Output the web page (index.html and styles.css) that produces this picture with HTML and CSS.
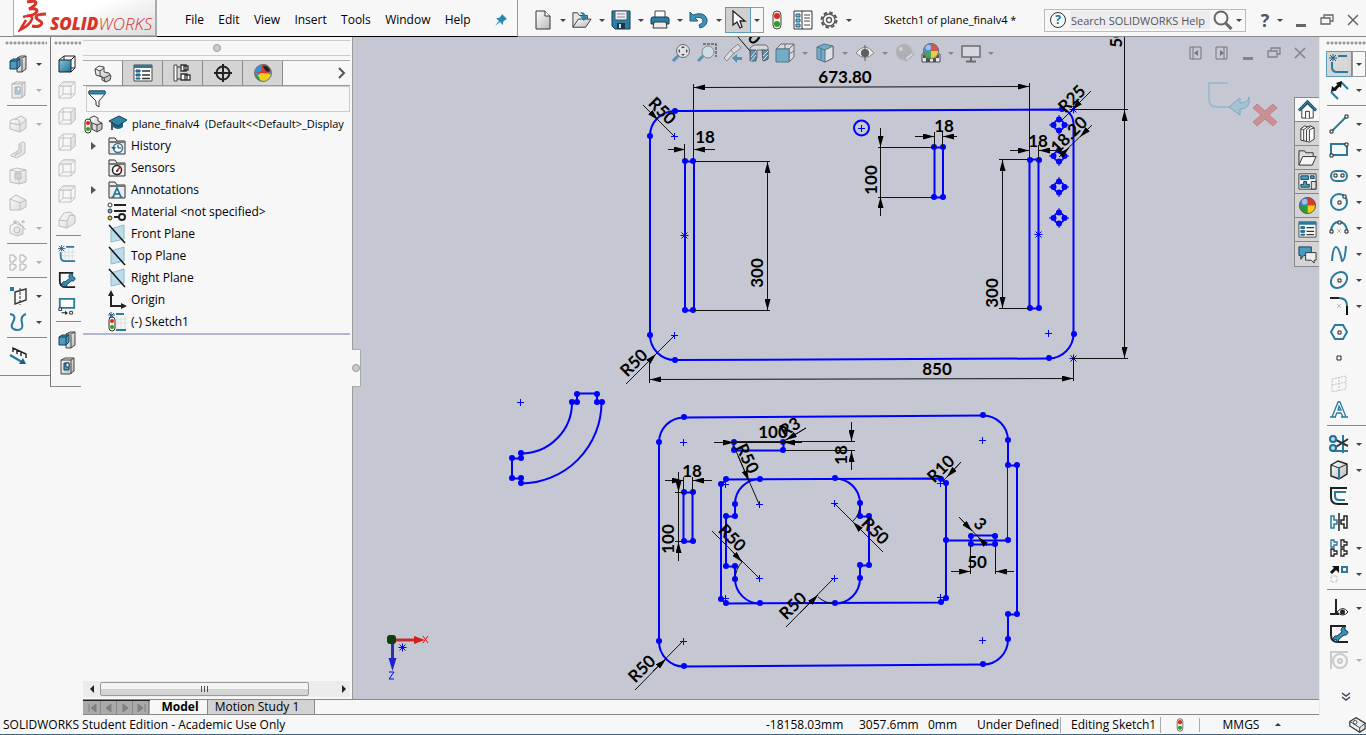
FILE: index.html
```html
<!DOCTYPE html>
<html lang="en">
<head>
    <meta charset="UTF-8">
    <meta name="viewport" content="width=device-width, initial-scale=1.0">
    <title>SOLIDWORKS - Sketch1 of plane_finalv4</title>
    <link rel="stylesheet" href="styles.css">
</head>
<body>
    <!-- icon sprite -->
    <svg class="sprite" aria-hidden="true">
        <defs>
            <linearGradient id="blue" x1="0" y1="0" x2="1" y2="1"><stop offset="0" stop-color="#8cc4dd"/><stop offset="1" stop-color="#1f6f96"/></linearGradient>
            <linearGradient id="grey" x1="0" y1="0" x2="1" y2="1"><stop offset="0" stop-color="#fff"/><stop offset="1" stop-color="#b9b9b9"/></linearGradient>
        </defs>
        <symbol id="i-extrude" viewBox="0 0 18 18"><path d="M8 3l4-2h5v13l-4 3H8z" fill="url(#grey)" stroke="#444"/><path d="M13 4v13M8 3h5l4-2" fill="none" stroke="#444"/><path d="M1 6l3-2h7v7l-3 3H1z" fill="#4a9bbd" stroke="#173f55"/><path d="M1 6h7v8M8 6l3-2" fill="none" stroke="#173f55"/></symbol>
        <symbol id="i-cut" viewBox="0 0 18 18"><path d="M3 3l4-2h9v13l-4 3H3z" fill="url(#grey)" stroke="#444"/><path d="M3 3h10v14M13 3l3-2" fill="none" stroke="#444"/><path d="M6 6h5v7H6z" fill="#4a9bbd" stroke="#173f55"/><path d="M8 6v4h3V6z" fill="#fff" stroke="#173f55"/></symbol>
        <symbol id="i-fillet3d" viewBox="0 0 18 18"><path d="M1 8q0-4 5-4l6-3 5 3v9l-6 4-10-3z" fill="url(#grey)" stroke="#666"/><path d="M6 4q5 0 5 5v8M1 8l10 2 6-5" fill="none" stroke="#666"/></symbol>
        <symbol id="i-rib" viewBox="0 0 18 18"><path d="M2 14l8-5V3l4-2 2 1v10l-8 5-6-2z" fill="url(#grey)" stroke="#666"/><path d="M12 3v8l-7 4M10 9l-4 5" fill="none" stroke="#666"/></symbol>
        <symbol id="i-shell" viewBox="0 0 18 18"><path d="M1 3l7-2 9 2v12l-7 2-9-2z" fill="url(#grey)" stroke="#666"/><path d="M1 3l9 2v12M10 5l7-2" fill="none" stroke="#666"/><path d="M6 6h6v6H6z" fill="#999" stroke="#666"/></symbol>
        <symbol id="i-draft" viewBox="0 0 18 18"><path d="M1 6l6-4 10 5v7l-6 3H1z" fill="url(#grey)" stroke="#666"/><path d="M1 6l10 4v7M11 10l6-3" fill="none" stroke="#666"/></symbol>
        <symbol id="i-wand" viewBox="0 0 18 18"><path d="M1 7l5-3 8 3v8l-6 2-7-3z" fill="url(#grey)" stroke="#666"/><circle cx="8" cy="11" r="3" fill="none" stroke="#666"/><path d="M8 2l9 9M6 1v4M4 3h4M14 1v3M12 3h4" stroke="#555"/></symbol>
        <symbol id="i-pattern" viewBox="0 0 18 18"><path d="M1 2h4v2h2v3H5v2H1zM11 2h4v2h2v3h-2v2h-4zM1 11h4v1h2v3H5v2H1zM11 11h4v1h2v3h-2v2h-4z" fill="#fff" stroke="#444"/></symbol>
        <symbol id="i-refplane" viewBox="0 0 18 18"><path d="M1 0h4v4H1z" fill="#2b7a9d"/><path d="M6 5l11-3v11L6 17z" fill="none" stroke="#333" stroke-width="1.4"/><path d="M11 1v17" stroke="#333" stroke-dasharray="3 1"/></symbol>
        <symbol id="i-curve" viewBox="0 0 18 18"><path d="M1 1q7 1 3 8t4 8q7 0 5-7t4-9" fill="none" stroke="#2b7a9d" stroke-width="2"/></symbol>
        <symbol id="i-instant" viewBox="0 0 18 18"><path d="M4 5V1l13 6v4M8 7V3M12 9V5" fill="none" stroke="#222" stroke-width="1.4"/><path d="M1 8l12 7" stroke="#2b7a9d" stroke-width="2.4"/><path d="M17 17h-7l4-6z" fill="#1f5f80"/></symbol>

        <symbol id="i-front" viewBox="0 0 18 18"><path d="M6 1h11v12M13 5l4-4M1 5l5-4M6 1v4M13 13h4" fill="none" stroke="#222"/><path d="M1 5h12v12H1z" fill="url(#blue)" stroke="#123"/><path d="M13 17l4-4" stroke="#222"/></symbol>
        <symbol id="i-cube" viewBox="0 0 18 18"><path d="M1 5h12v12H1zM5 1h12v12H5z" fill="none" stroke="#777"/><path d="M1 5l4-4h12l-4 4z" fill="#ddd" stroke="#777"/><path d="M13 17l4-4M1 17l4-4" stroke="#777"/></symbol>
        <symbol id="i-cubeside" viewBox="0 0 18 18"><path d="M1 5h12v12H1zM5 1h12v12H5zM1 5l4-4M1 17l4-4" fill="none" stroke="#777"/><path d="M13 5l4-4v12l-4 4z" fill="#ccc" stroke="#777"/></symbol>
        <symbol id="i-iso" viewBox="0 0 18 18"><path d="M1 9l5-7 6-1 5 4v7l-8 5-8-2z" fill="url(#grey)" stroke="#666"/><path d="M1 9l8 1v7M9 10l3-6 5 1" fill="none" stroke="#666"/></symbol>
        <symbol id="i-sketch" viewBox="0 0 20 20"><path d="M8 6v12M12 4v14M16 4v14M4 8h15M4 12h15" stroke="#ddd" fill="none"/><path d="M9 2h9M3 8v5q0 5 5 5h11" fill="none" stroke="#2b7a9d" stroke-width="2"/><path d="M4 0v7M0 4h8M1 1l6 6M7 1L1 7" stroke="#1f5f80"/></symbol>
        <symbol id="i-repair" viewBox="0 0 20 20"><path d="M17 2H2v9q0 7 7 7h10" fill="none" stroke="#222" stroke-width="2"/><path d="M5 17a3 3 0 0 1 3-5l5-4a3 3 0 0 1 3-5v3l2 1 1 1a3 3 0 0 1-4 3l-5 4a3 3 0 0 1-3 3l1-2-2-1z" fill="#3b8db2" stroke="#123f55"/></symbol>
        <symbol id="i-convert" viewBox="0 0 20 20"><path d="M2 2h16v10H2z" fill="#fff" stroke="#2b7a9d" stroke-width="2"/><path d="M1 12h3v3H1zM13 16h3v3h-3z" fill="#fff" stroke="#222"/><path d="M4 17h4v-2l3 3-3 2v-2H4z" fill="#222"/></symbol>

        <symbol id="i-smart" viewBox="0 0 20 20"><path d="M2 12l7 7M12 2l7 7" stroke="#2b7a9d" stroke-width="2"/><path d="M5 10l6-6" stroke="#111" stroke-width="3"/><path d="M2 12l1-6 5 4zM13 1l-1 7-5-5z" fill="#111"/></symbol>
        <symbol id="i-line" viewBox="0 0 20 20"><path d="M3 17L17 3" stroke="#2b7a9d" stroke-width="2"/><path d="M1 16h3v3H1zM16 1h3v3h-3z" fill="#fff" stroke="#222"/></symbol>
        <symbol id="i-rect" viewBox="0 0 20 20"><path d="M2 4h16v11H2z" fill="none" stroke="#2b7a9d" stroke-width="2"/><path d="M1 14h3v3H1zM16 3h3v3h-3z" fill="#fff" stroke="#222"/></symbol>
        <symbol id="i-slot" viewBox="0 0 20 20"><rect x="2" y="5" width="16" height="10" rx="5" fill="none" stroke="#2b7a9d" stroke-width="2"/><path d="M5 8h3v3H5zM12 8h3v3h-3z" fill="#fff" stroke="#222"/></symbol>
        <symbol id="i-circle" viewBox="0 0 20 20"><circle cx="10" cy="10" r="8" fill="none" stroke="#2b7a9d" stroke-width="2"/><path d="M9 9h3v3H9zM14 3h3v3h-3z" fill="#fff" stroke="#222"/></symbol>
        <symbol id="i-arc" viewBox="0 0 20 20"><path d="M2 13q1-9 8-9t8 9" fill="none" stroke="#2b7a9d" stroke-width="2"/><path d="M1 12h3v3H1zM16 12h3v3h-3zM9 3h3v3H9z" fill="#fff" stroke="#222"/><path d="M8 11l4 4M12 11l-4 4" stroke="#bbb"/></symbol>
        <symbol id="i-spline" viewBox="0 0 20 20"><path d="M3 17Q4 3 7 3t6 14Q16 17 17 2" fill="none" stroke="#2b7a9d" stroke-width="2"/></symbol>
        <symbol id="i-ellipse" viewBox="0 0 20 20"><ellipse cx="10" cy="10" rx="9" ry="7" transform="rotate(-42 10 10)" fill="none" stroke="#2b7a9d" stroke-width="2"/><path d="M9 9h3v3H9z" fill="#fff" stroke="#222"/></symbol>
        <symbol id="i-skfillet" viewBox="0 0 20 20"><path d="M1 2h9" stroke="#222" stroke-width="2"/><path d="M10 2q8 0 8 8" fill="none" stroke="#2b7a9d" stroke-width="2"/><path d="M18 10v9" stroke="#111" stroke-width="2"/><path d="M8 8l4 4M12 8l-4 4" stroke="#bbb"/></symbol>
        <symbol id="i-polygon" viewBox="0 0 20 20"><path d="M6 3h8l4 7-4 7H6l-4-7z" fill="none" stroke="#2b7a9d" stroke-width="2"/><path d="M9 9h3v3H9z" fill="#fff" stroke="#222"/></symbol>
        <symbol id="i-point" viewBox="0 0 20 20"><path d="M8 8h4v4H8z" fill="#fff" stroke="#222"/></symbol>
        <symbol id="i-skplane" viewBox="0 0 20 20"><path d="M3 5l14-3v13L3 18zM10 3v14M3 11l14-3" fill="none" stroke="#777" stroke-dasharray="2 1"/></symbol>
        <symbol id="i-text" viewBox="0 0 20 20"><path d="M3 17L9 2h2l6 15h-3l-2-4H8l-2 4zM9 10h3l-2-4zM1 17h6M12 17h7" fill="none" stroke="#2b7a9d" stroke-width="1.3"/></symbol>
        <symbol id="i-trim" viewBox="0 0 20 20"><path d="M14 1v18M4 17h15" stroke="#2b7a9d" stroke-width="2"/><path d="M7 6l12 6M7 13l12-8" stroke="#333" stroke-width="2"/><circle cx="4" cy="5" r="3" fill="#bfe0ee" stroke="#1f6f96" stroke-width="2"/><circle cx="4" cy="14" r="3" fill="#bfe0ee" stroke="#1f6f96" stroke-width="2"/></symbol>
        <symbol id="i-convent" viewBox="0 0 20 20"><path d="M2 5l7-4 9 3v10l-8 5-8-3z" fill="url(#grey)" stroke="#222" stroke-width="1.4"/><path d="M2 5l8 3 8-4" fill="none" stroke="#222"/><path d="M10 8v11" stroke="#2b7a9d" stroke-width="2"/></symbol>
        <symbol id="i-offset" viewBox="0 0 20 20"><path d="M18 2H2v9q0 7 7 7h10" fill="none" stroke="#222" stroke-width="2"/><path d="M17 6H6v4q0 4 4 4h6" fill="none" stroke="#2b7a9d" stroke-width="2"/></symbol>
        <symbol id="i-mirror" viewBox="0 0 20 20"><path d="M2 4h3v4h3v4H5v4H2z" fill="none" stroke="#2b7a9d" stroke-width="1.5"/><path d="M10 1v18" stroke="#222" stroke-width="1.5"/><path d="M18 4h-3v4h-3v4h3v4h3z" fill="none" stroke="#222" stroke-width="1.5"/></symbol>
        <symbol id="i-skpattern" viewBox="0 0 20 20"><path d="M2 2h3v2h3v3H5v2H2z" fill="none" stroke="#2b7a9d" stroke-width="1.3"/><path d="M12 2h3v2h3v3h-3v2h-3zM2 11h3v2h3v3H5v2H2zM12 11h3v2h3v3h-3v2h-3z" fill="none" stroke="#222" stroke-width="1.3"/></symbol>
        <symbol id="i-move" viewBox="0 0 20 20"><path d="M2 9l5-5" stroke="#111" stroke-width="3"/><path d="M3 2h7v7z" fill="#111"/><path d="M13 3h5v5h-5z" fill="none" stroke="#2b7a9d" stroke-width="2"/><path d="M2 12h6v6H2z" fill="none" stroke="#bbb" stroke-dasharray="2 1" stroke-width="1"/></symbol>
        <symbol id="i-relations" viewBox="0 0 20 20"><path d="M7 1v15M1 16h9" stroke="#222" stroke-width="2"/><path d="M8 14q6-7 11 0-5 6-11 0z" fill="#fff" stroke="#222"/><circle cx="13.5" cy="14" r="2.5" fill="#222"/></symbol>
        <symbol id="i-snap" viewBox="0 0 20 20"><path d="M19 2H2v17" fill="none" stroke="#888" stroke-width="2"/><circle cx="11" cy="11" r="7" fill="none" stroke="#888" stroke-width="2"/><circle cx="11" cy="11" r="2" fill="none" stroke="#888" stroke-width="2"/></symbol>

        <symbol id="i-part" viewBox="0 0 20 20"><path d="M2 5l4-3 5 1v5l5 1 2 3-1 4-4 2-4-2v-3l-6-2z" fill="url(#grey)" stroke="#444"/><path d="M2 5l5 2 4-3M7 7v5l4 2 1 4M11 14l6-3" fill="none" stroke="#444"/></symbol>
        <symbol id="i-list" viewBox="0 0 20 20"><path d="M1 2h18v16H1z" fill="#fff" stroke="#444"/><path d="M1 2h18v3H1z" fill="#2b7a9d"/><path d="M3 7h4v2H3zM3 11h4v2H3zM3 15h4v1H3z" fill="#2b7a9d" stroke="#1f5f80"/><path d="M9 8h8M9 12h8M9 15.5h8" stroke="#333" stroke-width="1.3"/></symbol>
        <symbol id="i-props" viewBox="0 0 20 20"><path d="M1 1h18v18H1z" fill="#fff" stroke="#333"/><path d="M3 4h4v3H3zM3 9h4v3H3zM3 14h4v3H3z" fill="#7fbcd6" stroke="#1f5f80"/><path d="M9 1v18" stroke="#333"/><path d="M11 5h6M11 8h6M11 11h6M11 15h6" stroke="#444"/></symbol>
        <symbol id="i-config" viewBox="0 0 20 20"><path d="M3 4h5M3 16h7" fill="none" stroke="#333"/><path d="M1 2h3v16H1z" fill="#fff" stroke="#444"/><path d="M8 2h5v6H8zM11 3h4v4h-4zM8 11h6v6H8zM12 12h5v5h-5z" fill="#fff" stroke="#333" stroke-width="1.3"/></symbol>
        <symbol id="i-dimx" viewBox="0 0 20 20"><circle cx="10" cy="10" r="6.5" fill="none" stroke="#222" stroke-width="2"/><path d="M10 1v18M1 10h18" stroke="#222" stroke-width="2"/></symbol>
        <symbol id="i-ball" viewBox="0 0 20 20"><circle cx="10" cy="10" r="8.5" fill="#3b7fd0"/><path d="M10 1.5a8.5 8.5 0 0 1 8.5 8.5H10z" fill="#d83a2c"/><path d="M10 10h8.5A8.5 8.5 0 0 1 10 18.5z" fill="#f2cf1c"/><path d="M10 10v8.5A8.5 8.5 0 0 1 1.5 10z" fill="#2b9b3a"/><circle cx="7" cy="6" r="3" fill="#fff" opacity=".5"/><circle cx="10" cy="10" r="8.5" fill="none" stroke="#555"/></symbol>
        <symbol id="i-display-tab" viewBox="0 0 20 20"><circle cx="10" cy="10" r="8.5" fill="#3b8fd8"/><path d="M2 9l8-8q7 0 8 8l-8 2z" fill="#d83a2c"/><path d="M3 14l5-4 10 1q-1 7-8 7.5z" fill="#f2cf1c"/><path d="M2 11l4 3 1 4Q2 16 2 11z" fill="#2b9b3a"/><path d="M2 9q1-6 7-7L8 9z" fill="#3b8fd8"/><path d="M10 3q5-1 7 5-4 3-7-5z" fill="#222"/><circle cx="10" cy="10" r="8.5" fill="none" stroke="#777"/></symbol>
        <symbol id="i-filter" viewBox="0 0 20 20"><path d="M2 2h16v3l-6 7v6l-3-2v-4L2 5z" fill="#fff" stroke="#333"/><path d="M2 2h16v3H2z" fill="#2b90b8" stroke="#1f5f80"/></symbol>
        <symbol id="i-lights" viewBox="0 0 10 20"><rect x="1" y="1" width="8" height="18" rx="4" fill="#f2eee4" stroke="#444"/><circle cx="5" cy="6" r="3" fill="#dc2a17"/><circle cx="5" cy="14" r="3" fill="#2f9e25"/></symbol>
        <symbol id="i-rootpart" viewBox="0 0 20 20"><path d="M6 4l4-2 4 2v3l4 2v6l-5 3-5-3V9L6 8z" fill="url(#grey)" stroke="#444"/><path d="M8 9l5 2 5-2M13 11v7" fill="none" stroke="#444"/><rect x="1" y="5" width="6" height="14" rx="3" fill="#f2eee4" stroke="#333"/><circle cx="4" cy="9" r="2" fill="#dc2a17"/><circle cx="4" cy="15" r="2" fill="#2f9e25"/></symbol>
        <symbol id="i-hat" viewBox="0 0 20 20"><path d="M5 8v5q5 4 10 0V8z" fill="#1f6080"/><path d="M1 7l10-5 8 4-9 6z" fill="#3184a8" stroke="#123f55"/><path d="M4 8v8" stroke="#123" stroke-width="1.5"/></symbol>
        <symbol id="i-folder" viewBox="0 0 20 20"><path d="M2 18V2h6l2 3h8v13z" fill="#ececec" stroke="#333"/><path d="M2 5h16v2H2z" fill="#777"/></symbol>
        <symbol id="i-history" viewBox="0 0 20 20"><use href="#i-folder"/><circle cx="11" cy="12" r="4.5" fill="#fff" stroke="#2b7a9d" stroke-width="1.5"/><path d="M11 9v3h3" stroke="#222" fill="none"/><path d="M4 11l3 3 2-3z" fill="#1f5f80"/></symbol>
        <symbol id="i-sensor" viewBox="0 0 20 20"><use href="#i-folder"/><circle cx="10" cy="12" r="4.5" fill="#fff" stroke="#222" stroke-width="1.5"/><path d="M10 13l3-4" stroke="#d83020" stroke-width="2"/><circle cx="10" cy="13" r="1" fill="#222"/></symbol>
        <symbol id="i-annot" viewBox="0 0 20 20"><use href="#i-folder"/><path d="M6 17l4-9 4 9M7.5 14h5M4.5 17h3M12.5 17h3" fill="none" stroke="#1f6f96" stroke-width="1.6"/></symbol>
        <symbol id="i-material" viewBox="0 0 20 20"><path d="M7 3h12M7 9h12M7 15h5" stroke="#222" stroke-width="2"/><circle cx="3" cy="3" r="2" fill="#fff" stroke="#333"/><circle cx="3" cy="9" r="2" fill="#64b0d0" stroke="#333"/><circle cx="3" cy="16" r="2" fill="#f2c21c" stroke="#333"/><circle cx="15" cy="15" r="3" fill="#fff" stroke="#222" stroke-width="2"/></symbol>
        <symbol id="i-plane" viewBox="0 0 20 20"><path d="M4 5l13-4v14L4 18z" fill="#bcdcea" stroke="#8bb8cc"/><path d="M2 1l16 18" stroke="#111" stroke-width="1.5"/></symbol>
        <symbol id="i-origin" viewBox="0 0 20 20"><path d="M4 4v12h12" fill="none" stroke="#222" stroke-width="2"/><path d="M4 0l3 6H1zM20 16l-6 3v-6z" fill="#222"/></symbol>
        <symbol id="i-sketchnode" viewBox="0 0 20 20"><path d="M10 4v13M14 4v13M18 4v13M9 7h11M9 11h11" stroke="#ddd"/><path d="M9 2h8M9 18h10" stroke="#2b7a9d" stroke-width="2"/><path d="M4 0v6M1 3h7M2 1l5 5M7 1L2 6" stroke="#1f5f80"/><rect x="2" y="5" width="6" height="14" rx="3" fill="#f2eee4" stroke="#333"/><circle cx="5" cy="9" r="2" fill="#dc2a17"/><circle cx="5" cy="15" r="2" fill="#2f9e25"/></symbol>

        <symbol id="i-pin" viewBox="0 0 14 14"><path d="M8 1l5 5-2 1-2 2 0 3-3-3-5 4 4-5-3-3h3l2-2z" fill="#2b86b0"/></symbol>
        <symbol id="i-new" viewBox="0 0 20 20"><path d="M3 1h9l5 5v13H3z" fill="url(#grey)" stroke="#333"/><path d="M12 1v5h5" fill="#fff" stroke="#333"/></symbol>
        <symbol id="i-open" viewBox="0 0 22 20"><path d="M1 18V2h5l2 3h9v4" fill="#e6e6e6" stroke="#333"/><path d="M1 18L7 9h14l-6 9z" fill="url(#grey)" stroke="#333"/><path d="M8 2q6-2 7 4h3l-5 5-4-5h3q0-3-4-4z" fill="#2b7fa6"/></symbol>
        <symbol id="i-save" viewBox="0 0 20 20"><path d="M1 1h18v18H4l-3-3z" fill="#2b7fa6" stroke="#123f55"/><path d="M4 1h12v9H4z" fill="#eee" stroke="#456"/><path d="M6 4h8M6 7h8" stroke="#888"/><path d="M6 13h8v6H6z" fill="#234"/><path d="M8 14h2v4H8z" fill="#ddd"/></symbol>
        <symbol id="i-print" viewBox="0 0 20 20"><path d="M5 8V1h10v7" fill="#fff" stroke="#444"/><path d="M1 9q0-2 2-2h14q2 0 2 2v5H1z" fill="#2b7fa6" stroke="#123f55"/><path d="M4 12h12l1 6H3z" fill="#eee" stroke="#333"/></symbol>
        <symbol id="i-undo" viewBox="0 0 20 20"><path d="M1 2l3 3q11-4 14 4 1 7-7 9l-1-3q5-2 4-5-2-4-8-2l3 3H1z" fill="#3b93b9" stroke="#1f5a78"/></symbol>
        <symbol id="i-pointer" viewBox="0 0 20 20"><path d="M5 1v14l4-3 3 6 2-1-2-6h5z" fill="#fff" stroke="#222" stroke-width="1.3"/></symbol>
        <symbol id="i-gear" viewBox="0 0 20 20"><circle cx="10" cy="10" r="7.5" fill="none" stroke="#555" stroke-width="2" stroke-dasharray="3.5 2.4"/><circle cx="10" cy="10" r="6" fill="#f7f7f7" stroke="#555" stroke-width="1.3"/><circle cx="10" cy="10" r="2.5" fill="none" stroke="#555" stroke-width="1.3"/></symbol>
        <symbol id="i-lens" viewBox="0 0 20 20"><circle cx="8" cy="8" r="6.5" fill="none" stroke="#666" stroke-width="2"/><path d="M12.5 13l6 6" stroke="#666" stroke-width="3"/></symbol>
        <symbol id="i-min" viewBox="0 0 14 14"><path d="M2 11h10v3H2z" fill="#666"/></symbol>
        <symbol id="i-restore" viewBox="0 0 14 14"><path d="M4 5V2h9v6h-3" fill="none" stroke="#666" stroke-width="1.3"/><path d="M1 5h9v6H1z" fill="none" stroke="#666" stroke-width="1.3"/></symbol>
        <symbol id="i-close" viewBox="0 0 14 14"><path d="M2 2l10 10M12 2L2 12" stroke="#666" stroke-width="1.5"/></symbol>

        <symbol id="i-zoomfit" viewBox="0 0 20 20"><path d="M2 18l6-6" stroke="#3b87ab" stroke-width="3"/><circle cx="12" cy="8" r="6.5" fill="#e4e8ec" stroke="#555"/><path d="M12 3l2 2h-4zM12 13l2-2h-4zM7 8l2-2v4zM17 8l-2-2v4z" fill="#333"/></symbol>
        <symbol id="i-zoomarea" viewBox="0 0 20 20"><path d="M6 1h13v13" fill="none" stroke="#444" stroke-dasharray="3 1" stroke-width="1.5"/><path d="M1 18l6-6" stroke="#3b87ab" stroke-width="3"/><circle cx="11" cy="9" r="6" fill="#d3e2ea" stroke="#777"/></symbol>
        <symbol id="i-prev" viewBox="0 0 20 20"><path d="M1 15l7-8 7-6 3 4-8 6-6 7z" fill="#e2e2e2" stroke="#777"/><path d="M8 7l3 4" stroke="#777"/><path d="M9 15l5-4v3h5v3h-5v3z" fill="#3b87ab"/></symbol>
        <symbol id="i-section" viewBox="0 0 20 20"><path d="M1 5l4-3h12l2 2v12l-4 2V7H8v8l-7 3z" fill="#ddd" stroke="#555"/><path d="M1 7h6v11H2zM13 7h6v9l-5 2z" fill="#3b87ab" stroke="#345"/><path d="M2 14l5-6M2 18l5-6M14 13l5-5M14 17l5-5" stroke="#d9eaf2"/></symbol>
        <symbol id="i-orient" viewBox="0 0 20 20"><path d="M6 1h13v13l-5 5V6H1l5-5z" fill="#dedede" stroke="#555"/><path d="M14 6l5-5M10 1v5M14 11l5-3" stroke="#555"/><path d="M1 6h13v13H1z" fill="#5fa6c6" stroke="#37627a"/></symbol>
        <symbol id="i-display" viewBox="0 0 20 20"><path d="M2 4l7-3 9 2v12l-8 4-8-3z" fill="#5fa6c6" stroke="#37627a"/><path d="M10 7l8-4v12l-8 4z" fill="#e2eaee" stroke="#555"/><path d="M2 4l8 3M6 5v12" stroke="#37627a"/></symbol>
        <symbol id="i-eye" viewBox="0 0 20 20"><path d="M1 10q9-12 18 0-9 9-18 0z" fill="#eee" stroke="#777"/><circle cx="10" cy="10" r="4" fill="#444"/><path d="M10 2v16" stroke="#444"/></symbol>
        <symbol id="i-appear" viewBox="0 0 20 20"><circle cx="9" cy="9" r="8" fill="#999"/><circle cx="6" cy="6" r="2" fill="#ddd"/><path d="M10 18l1-4 6-5 2 2-6 6z" fill="#ddd" stroke="#888"/></symbol>
        <symbol id="i-scene" viewBox="0 0 20 20"><path d="M1 11h18v8H1z" fill="#eee" stroke="#333"/><path d="M2 12h3v3H2zM15 12h3v3h-3zM5 15h4v4H5zM12 15h3v4h-3z" fill="#333"/><g transform="translate(1 -1) scale(.9)"><use href="#i-ball" width="20" height="20"/></g></symbol>
        <symbol id="i-monitor" viewBox="0 0 20 20"><path d="M1 3h18v11H1z" fill="#d9dde2" stroke="#555" stroke-width="1.5"/><path d="M10 14v4M5 18.5h10" stroke="#555" stroke-width="2"/></symbol>
        <symbol id="i-prevdoc" viewBox="0 0 14 14"><path d="M1 1h11v12H1zM4 1v12" fill="none" stroke="#555"/><path d="M5 7l4-3v6z" fill="#555"/></symbol>
        <symbol id="i-nextdoc" viewBox="0 0 14 14"><path d="M1 1h11v12H1zM9 1v12" fill="none" stroke="#555"/><path d="M9 7L5 4v6z" fill="#555"/></symbol>

        <symbol id="i-home" viewBox="0 0 20 20"><path d="M4 10v9h12v-9l-6-6z" fill="#fff" stroke="#333"/><path d="M1 11l9-9 9 9" fill="none" stroke="#123f55" stroke-width="3"/><path d="M1 11l9-9 9 9" fill="none" stroke="#5fb4d6"/><path d="M8 19v-7h4v7" fill="#fff" stroke="#333"/></symbol>
        <symbol id="i-library" viewBox="0 0 20 20"><path d="M3 5l4-3 3 1 3-1 4 2v12l-5 3-9-2z" fill="#fff" stroke="#333"/><path d="M3 5l3 1v12M6 6l4-3M9 6v12M9 6l4-3M12 6v12M12 6l5-2" fill="none" stroke="#333"/></symbol>
        <symbol id="i-explorer" viewBox="0 0 20 20"><path d="M1 18V3h6l1 2h8v4" fill="#ddd" stroke="#333"/><path d="M1 18L5 9h14l-4 9z" fill="#f6f6f6" stroke="#333"/></symbol>
        <symbol id="i-palette" viewBox="0 0 20 20"><path d="M1 2h18v16H1z" fill="#fff" stroke="#333"/><path d="M3 4h8v4H3zM13 4h4v3h-4zM6 10v3H3v3h9v-3H9v-3z" fill="#4a9bbd" stroke="#123f55"/><path d="M14 10h5v8h-5z" fill="#ddd" stroke="#333"/></symbol>
        <symbol id="i-forum" viewBox="0 0 20 20"><path d="M1 2h13v9H6l-3 4v-4H1z" fill="#4a9bbd" stroke="#123f55"/><path d="M8 8h11v8h-2v3l-3-3H8z" fill="#eee" stroke="#333"/></symbol>
        <symbol id="i-tag" viewBox="0 0 20 20"><path d="M2 6l7-4 10 6v6l-6 4L2 11z" fill="#eee" stroke="#333" stroke-width="1.3"/><path d="M2 6l11 7 6-5M13 13v5" fill="none" stroke="#333"/><circle cx="8" cy="7" r="2" fill="#fff" stroke="#333"/></symbol>
    </svg>

    <header class="titlebar">
        <div class="logo">
            <svg class="logo-mark" width="30" height="34" viewBox="0 0 30 34"><path d="M9 3q9-2 9 1-1 3-7 6 8-1 8 2-1 4-10 5" fill="none" stroke="#d8352a" stroke-width="3"/><path d="M5 18q10-3 9 2-2 6-12 11l6-10" fill="none" stroke="#d8352a" stroke-width="2.5"/><path d="M28 15q-9 0-10 3 0 2 4 4 4 3-1 5-3 1-7 0" fill="none" stroke="#d8352a" stroke-width="3"/></svg>
            <span class="logo-text"><b>SOLID</b>WORKS</span>
        </div>
        <nav class="menu">
            <a href="#">File</a>
            <a href="#">Edit</a>
            <a href="#">View</a>
            <a href="#">Insert</a>
            <a href="#">Tools</a>
            <a href="#">Window</a>
            <a href="#">Help</a>
            <button class="pin" aria-label="Pin menu"><svg width="14" height="14"><use href="#i-pin"/></svg></button>
        </nav>
        <div class="quick">
            <button aria-label="New"><svg><use href="#i-new"/></svg></button><button class="drop" aria-label="New options"></button>
            <button aria-label="Open"><svg><use href="#i-open"/></svg></button><button class="drop" aria-label="Open options"></button>
            <button aria-label="Save"><svg><use href="#i-save"/></svg></button><button class="drop" aria-label="Save options"></button>
            <button aria-label="Print"><svg><use href="#i-print"/></svg></button><button class="drop" aria-label="Print options"></button>
            <button aria-label="Undo"><svg><use href="#i-undo"/></svg></button><button class="drop" aria-label="Undo options"></button>
            <button class="picked" aria-label="Select"><svg><use href="#i-pointer"/></svg></button><button class="drop boxed" aria-label="Select options"></button>
            <button aria-label="Rebuild"><svg><use href="#i-lights"/></svg></button>
            <button aria-label="File properties"><svg><use href="#i-props"/></svg></button>
            <button aria-label="Options"><svg><use href="#i-gear"/></svg></button><button class="drop" aria-label="More options"></button>
        </div>
        <div class="doc-title">Sketch1 of plane_finalv4 *</div>
        <div class="search">
            <span class="help-badge">?</span>
            <input type="text" placeholder="Search SOLIDWORKS Help" aria-label="Search SOLIDWORKS Help">
            <button aria-label="Search"><svg width="20" height="20"><use href="#i-lens"/></svg></button>
            <button class="drop" aria-label="Search options"></button>
        </div>
        <div class="window-buttons">
            <button class="help" aria-label="Help">?</button><button class="drop" aria-label="Help options"></button>
            <button aria-label="Minimize"><svg><use href="#i-min"/></svg></button>
            <button aria-label="Restore"><svg><use href="#i-restore"/></svg></button>
            <button aria-label="Close"><svg><use href="#i-close"/></svg></button>
        </div>
    </header>

    <main class="main">
        <div class="toolbar features">
            <div class="grip"></div>
            <div class="tool"><button aria-label="Extruded boss"><svg><use href="#i-extrude"/></svg></button><button class="drop" aria-label="More"></button></div>
            <div class="tool off"><button aria-label="Extruded cut"><svg><use href="#i-cut"/></svg></button><button class="drop" aria-label="More"></button></div>
            <hr>
            <div class="tool off"><button aria-label="Fillet"><svg><use href="#i-fillet3d"/></svg></button><button class="drop" aria-label="More"></button></div>
            <div class="tool off"><button aria-label="Rib"><svg><use href="#i-rib"/></svg></button></div>
            <div class="tool off"><button aria-label="Shell"><svg><use href="#i-shell"/></svg></button></div>
            <div class="tool off"><button aria-label="Draft"><svg><use href="#i-draft"/></svg></button></div>
            <div class="tool off"><button aria-label="Hole wizard"><svg><use href="#i-wand"/></svg></button><button class="drop" aria-label="More"></button></div>
            <hr>
            <div class="tool off"><button aria-label="Linear pattern"><svg><use href="#i-pattern"/></svg></button><button class="drop" aria-label="More"></button></div>
            <hr>
            <div class="tool"><button aria-label="Reference geometry"><svg><use href="#i-refplane"/></svg></button><button class="drop" aria-label="More"></button></div>
            <div class="tool"><button aria-label="Curves"><svg><use href="#i-curve"/></svg></button><button class="drop" aria-label="More"></button></div>
            <hr>
            <div class="tool"><button aria-label="Instant3D"><svg><use href="#i-instant"/></svg></button></div>
        </div>

        <div class="toolbar views">
            <div class="grip"></div>
            <div class="tool"><button aria-label="Front"><svg><use href="#i-front"/></svg></button></div>
            <div class="tool off"><button aria-label="Back"><svg><use href="#i-cube"/></svg></button></div>
            <div class="tool off"><button aria-label="Left"><svg><use href="#i-cubeside"/></svg></button></div>
            <div class="tool off"><button aria-label="Right"><svg><use href="#i-cubeside"/></svg></button></div>
            <div class="tool off"><button aria-label="Top"><svg><use href="#i-cube"/></svg></button></div>
            <div class="tool off"><button aria-label="Bottom"><svg><use href="#i-cube"/></svg></button></div>
            <div class="tool off"><button aria-label="Isometric"><svg><use href="#i-iso"/></svg></button></div>
            <hr>
            <div class="tool"><button aria-label="Sketch"><svg><use href="#i-sketch"/></svg></button></div>
            <div class="tool"><button aria-label="Repair sketch"><svg><use href="#i-repair"/></svg></button></div>
            <div class="tool"><button aria-label="Convert"><svg><use href="#i-convert"/></svg></button></div>
            <hr>
            <div class="tool"><button aria-label="Extrude"><svg><use href="#i-extrude"/></svg></button></div>
            <div class="tool"><button aria-label="Cut"><svg><use href="#i-cut"/></svg></button></div>
        </div>

        <div class="center">
            <div class="workspace">
                <section class="panel">
                    <div class="panel-grip"></div>
                    <div class="panel-tabs">
                        <button class="active" aria-label="Feature tree"><svg><use href="#i-part"/></svg></button>
                        <button aria-label="Properties"><svg><use href="#i-list"/></svg></button>
                        <button aria-label="Configurations"><svg><use href="#i-config"/></svg></button>
                        <button aria-label="DimXpert"><svg><use href="#i-dimx"/></svg></button>
                        <button aria-label="Display"><svg><use href="#i-display-tab"/></svg></button>
                        <button class="more" aria-label="More tabs"><svg><path d="M9 5l5 5-5 5" fill="none" stroke="#555" stroke-width="2"/></svg></button>
                    </div>
                    <label class="filter"><svg><use href="#i-filter"/></svg><input type="text" aria-label="Filter"></label>
                    <ul class="tree">
                        <li class="root"><svg><use href="#i-rootpart"/></svg><svg><use href="#i-hat"/></svg><span>plane_finalv4 &nbsp;(Default&lt;&lt;Default&gt;_Display</span></li>
                        <li class="has-kids"><svg><use href="#i-history"/></svg><span>History</span></li>
                        <li><svg><use href="#i-sensor"/></svg><span>Sensors</span></li>
                        <li class="has-kids"><svg><use href="#i-annot"/></svg><span>Annotations</span></li>
                        <li><svg><use href="#i-material"/></svg><span>Material &lt;not specified&gt;</span></li>
                        <li><svg><use href="#i-plane"/></svg><span>Front Plane</span></li>
                        <li><svg><use href="#i-plane"/></svg><span>Top Plane</span></li>
                        <li><svg><use href="#i-plane"/></svg><span>Right Plane</span></li>
                        <li><svg><use href="#i-origin"/></svg><span>Origin</span></li>
                        <li><svg><use href="#i-sketchnode"/></svg><span>(-) Sketch1</span></li>
                    </ul>
                    <div class="scrollbar">
                        <button class="left" aria-label="Scroll left"></button>
                        <div class="track"><div class="thumb"></div></div>
                        <button class="right" aria-label="Scroll right"></button>
                    </div>
                    <button class="splitter" aria-label="Collapse panel"></button>
                </section>

                <section class="viewport">
                    <svg class="drawing" viewBox="353 37 966 662">
                        <defs>
                            <marker id="arrow" viewBox="0 0 11 6" refX="11" refY="3" markerWidth="11" markerHeight="6" markerUnits="userSpaceOnUse" orient="auto-start-reverse"><path d="M11 3L0 0v6z"/></marker>
                            <circle id="dot" r="3" stroke="none"/>
                            <path id="plus" d="M-3.5 0h7M0-3.5v7"/>
                            <path id="star" d="M-4 0h8M0-4v8M-3-3l6 6M3-3l-6 6"/>
                            <g id="diamond"><circle r="5" fill="none" stroke-width="2"/><path d="M-10 0h4M6 0h4M0-10v4M0 6v4"/><use href="#dot" x="-5.5"/><use href="#dot" x="5.5"/><use href="#dot" y="-5.5"/><use href="#dot" y="5.5"/></g>
                        </defs>

                        <!-- sketch entities -->
                        <g class="edge">
                            <path d="M675 111L1062 109.5A12 15 0 0 1 1073.5 124V333.5A25 25 0 0 1 1049 358.5L675 360A25 25 0 0 1 650 335V136A25 25 0 0 1 675 111z"/>
                            <path d="M685 161.5h9V310.5h-9zM934.5 147.5h8.5V197.5h-8.5zM1029.5 159.5h9V308.5h-9z"/>
                            <circle cx="861.5" cy="128" r="7.5"/>
                            <path d="M577 393.5h20v9h4.5A81 81 0 0 1 521 483.5v-5h-9v-20h9v-5A51 51 0 0 0 572 402.5h5z"/>
                            <path d="M684 417.5L983 415.5A25 25 0 0 1 1008 440.5V465.5h9V614.5h-9V639.5A25 25 0 0 1 983 664.5L684 666.5A25 25 0 0 1 659 641.5V442.5A25 25 0 0 1 684 417.5z"/>
                            <path d="M726 479.5L941 478.5 946 483.5V598L941 602.5 726 603.5 721 599V485z"/>
                            <path d="M760 479A25 25 0 0 0 735 504.5V516.5h-9V566.5h9V579A25 25 0 0 0 760 603.5M835 478.5A25 25 0 0 1 860 503.5V516.5h9V565.5h-9V578.5A25 25 0 0 1 835 603.5"/>
                            <path d="M733.5 442h50v8.5h-50zM683.5 492.5h9V541.5h-9z"/>
                            <path d="M946 540.5H1008M971 535.5h24.5v9H971z"/>
                            <path class="thin" d="M1007.5 466V540"/>
                        </g>
                        <g class="points">
                            <use href="#dot" x="675" y="111"/><use href="#dot" x="1062" y="109"/><use href="#dot" x="1074" y="334"/><use href="#dot" x="1049" y="358"/><use href="#dot" x="675" y="360"/><use href="#dot" x="650" y="335"/><use href="#dot" x="650" y="136"/>
                            <use href="#dot" x="685" y="161"/><use href="#dot" x="693" y="161"/><use href="#dot" x="685" y="310"/><use href="#dot" x="693" y="310"/>
                            <use href="#dot" x="934" y="147"/><use href="#dot" x="943" y="147"/><use href="#dot" x="934" y="197"/><use href="#dot" x="943" y="197"/>
                            <use href="#dot" x="1030" y="160"/><use href="#dot" x="1039" y="160"/><use href="#dot" x="1030" y="308"/><use href="#dot" x="1039" y="308"/>
                            <use href="#dot" x="577" y="394"/><use href="#dot" x="597" y="394"/><use href="#dot" x="597" y="402"/><use href="#dot" x="602" y="402"/><use href="#dot" x="572" y="402"/><use href="#dot" x="577" y="402"/>
                            <use href="#dot" x="521" y="453"/><use href="#dot" x="521" y="458"/><use href="#dot" x="512" y="458"/><use href="#dot" x="512" y="478"/><use href="#dot" x="521" y="478"/><use href="#dot" x="521" y="483"/>
                            <use href="#dot" x="684" y="417"/><use href="#dot" x="983" y="415"/><use href="#dot" x="1008" y="440"/><use href="#dot" x="1008" y="465"/><use href="#dot" x="1017" y="465"/><use href="#dot" x="1017" y="614"/><use href="#dot" x="1008" y="614"/><use href="#dot" x="1008" y="639"/><use href="#dot" x="983" y="664"/><use href="#dot" x="684" y="666"/><use href="#dot" x="659" y="641"/><use href="#dot" x="659" y="442"/>
                            <use href="#dot" x="726" y="479"/><use href="#dot" x="941" y="479"/><use href="#dot" x="946" y="483"/><use href="#dot" x="946" y="598"/><use href="#dot" x="941" y="602"/><use href="#dot" x="726" y="603"/><use href="#dot" x="721" y="599"/><use href="#dot" x="721" y="484"/>
                            <use href="#dot" x="760" y="479"/><use href="#dot" x="735" y="504"/><use href="#dot" x="735" y="516"/><use href="#dot" x="726" y="516"/><use href="#dot" x="726" y="566"/><use href="#dot" x="735" y="566"/><use href="#dot" x="735" y="579"/><use href="#dot" x="760" y="603"/>
                            <use href="#dot" x="835" y="478"/><use href="#dot" x="860" y="503"/><use href="#dot" x="860" y="516"/><use href="#dot" x="869" y="516"/><use href="#dot" x="869" y="565"/><use href="#dot" x="860" y="565"/><use href="#dot" x="860" y="578"/><use href="#dot" x="835" y="603"/>
                            <use href="#dot" x="734" y="442"/><use href="#dot" x="783" y="442"/><use href="#dot" x="734" y="450"/><use href="#dot" x="783" y="450"/>
                            <use href="#dot" x="684" y="492"/><use href="#dot" x="693" y="492"/><use href="#dot" x="684" y="541"/><use href="#dot" x="693" y="541"/>
                            <use href="#dot" x="946" y="540"/><use href="#dot" x="1008" y="540"/><use href="#dot" x="971" y="536"/><use href="#dot" x="995" y="536"/><use href="#dot" x="971" y="544"/><use href="#dot" x="995" y="544"/>
                            <use href="#plus" x="674.5" y="136.5"/><use href="#plus" x="674.5" y="335.5"/><use href="#plus" x="1048.5" y="333.5"/><use href="#plus" x="861.5" y="128.5"/><use href="#plus" x="520.5" y="402.5"/>
                            <use href="#plus" x="683.5" y="442.5"/><use href="#plus" x="982.5" y="440.5"/><use href="#plus" x="982.5" y="640.5"/><use href="#plus" x="683.5" y="641.5"/>
                            <use href="#plus" x="725.5" y="484.5"/><use href="#plus" x="725.5" y="598.5"/><use href="#plus" x="940.5" y="483.5"/><use href="#plus" x="940.5" y="597.5"/>
                            <use href="#plus" x="759.5" y="504.5"/><use href="#plus" x="834.5" y="503.5"/><use href="#plus" x="759.5" y="578.5"/><use href="#plus" x="834.5" y="578.5"/>
                            <use href="#star" x="1073.5" y="358.5"/><use href="#star" x="1073.5" y="109.5"/><use href="#star" x="684.5" y="235.5"/><use href="#star" x="1038.5" y="234.5"/><use href="#star" x="402.5" y="647.5"/>
                            <use href="#diamond" x="1059" y="125"/><use href="#diamond" x="1059" y="156"/><use href="#diamond" x="1059" y="187"/><use href="#diamond" x="1059" y="218"/>
                        </g>

                        <!-- dimension lines -->
                        <g class="ext">
                            <path d="M693.5 84V160M1029.5 83V158M694 161.5h76M694 310.5h76M684.5 144v16M878 147.5h56M878 197.5h56M934.5 132v15M942.5 132v15M1038.5 145v14M999 159.5h30M999 308.5h30M1074 109.5h54M1074 358.5h54M649.5 361v22M1073.5 360v21"/>
                            <path d="M683.5 477v14M692.5 477v14M675 492.5h8M675 541.5h8M785 441.5h70M785 450.5h70M970.5 545v29M995.5 545v29"/>
                            <path d="M738 37l12 14M860 503q0 12-7 18M818 597q8 7 17 6M742 562q-6 6-7 17"/>
                            <path d="M643 105l31 31M674 336l-48 48M1062 120l29-29M1059 157l33-32M733 444l26 60M712 531l47 47M834 503l49 49M834 578l-48 49M683 641l-48 49M961 462l-17 18M959 517l28 29M806 428l-24 14"/>
                            <path d="M880.5 147V197M678.5 492V541M734 442.5h50M1124.5 37V110"/>
                        </g>
                        <g class="dim">
                            <path d="M694 87.5L1029 86.5"/>
                            <path d="M767.5 162V310"/>
                            <path d="M1002.5 160V308"/>
                            <path d="M650 379.5L1073 378.5"/>
                            <path d="M1124.5 110V358"/>
                        </g>
                        <g class="dim-in">
                            <path d="M668 149.5h17"/><path d="M715 149.5h-21"/><path d="M915 136.5h19"/><path d="M957 136.5h-14"/><path d="M880.5 128v19"/><path d="M880.5 216v-19"/>
                            <path d="M1010 150.5h19"/><path d="M1060 150.5h-21"/><path d="M665 480.5h18"/><path d="M712 480.5h-19"/><path d="M678.5 472v20"/><path d="M678.5 561v-19"/>
                            <path d="M714 442.5h20"/><path d="M802 442.5h-18"/><path d="M851.5 422v19"/><path d="M851.5 470v-19"/><path d="M951 571.5h19"/><path d="M1014 571.5h-18"/>
                            <path d="M643 105l15 15"/><path d="M642 368l14-14"/><path d="M1091 91l-19 19"/><path d="M1059 157l10-9"/><path d="M1092 125l-12 12"/><path d="M738 456l11 25"/><path d="M730 549l12 13"/><path d="M870 539l-17-17"/><path d="M800 613l18-18"/><path d="M653 671l13-12"/><path d="M961 462l-14 15"/><path d="M959 517l13 14"/><path d="M806 428l-20 12"/><path d="M987 546l-9-9"/>
                        </g>

                        <g class="labels">
                            <text x="845" y="83">673.80</text>
                            <text x="937" y="375">850</text>
                            <text x="705" y="143">18</text>
                            <text x="944" y="132">18</text>
                            <text x="1038" y="147">18</text>
                            <text x="692" y="477">18</text>
                            <text x="773" y="438">100</text>
                            <text x="977" y="568">50</text>
                            <text transform="translate(763 273) rotate(-90)">300</text>
                            <text transform="translate(998 293) rotate(-90)">300</text>
                            <text transform="translate(877 180) rotate(-90)">100</text>
                            <text transform="translate(674 539) rotate(-90)">100</text>
                            <text transform="translate(847 455) rotate(-90)">18</text>
                            <text transform="translate(1122 33) rotate(-90)">500</text>
                            <text transform="translate(658 115) rotate(45)">R50</text>
                            <text transform="translate(638 367) rotate(-45)">R50</text>
                            <text transform="translate(1076 103) rotate(-45)">R25</text>
                            <text transform="translate(1073 139) rotate(-45)">18.20</text>
                            <text transform="translate(743 35) rotate(45)">R50</text>
                            <text transform="translate(742 461) rotate(64)">R50</text>
                            <text transform="translate(728 542) rotate(45)">R50</text>
                            <text transform="translate(871 535) rotate(45)">R50</text>
                            <text transform="translate(797 610) rotate(-45)">R50</text>
                            <text transform="translate(646 673) rotate(-45)">R50</text>
                            <text transform="translate(945 473) rotate(-45)">R10</text>
                            <text transform="translate(793 432) rotate(-32)">R3</text>
                            <text transform="translate(976 528) rotate(45)">3</text>
                        </g>

                        <!-- origin triad -->
                        <path d="M392 640h24" stroke="#c03030" stroke-width="3"/><path d="M425 640l-11-4v8z" fill="#d02020"/>
                        <path d="M392.5 640v20" stroke="#3030a0" stroke-width="3"/><path d="M392.5 671l-4-13h8z" fill="#2020d0"/>
                        <rect x="387" y="635" width="9" height="9" rx="3" fill="#104010"/>
                        <path d="M423 636l5 7M428 636l-5 7" stroke="#f00"/><path d="M389 672h5l-5 7h5" fill="none" stroke="#00f"/>
                    </svg>

                    <div class="heads-up">
                        <button aria-label="Zoom to fit"><svg><use href="#i-zoomfit"/></svg></button>
                        <button aria-label="Zoom to area"><svg><use href="#i-zoomarea"/></svg></button>
                        <button aria-label="Previous view"><svg><use href="#i-prev"/></svg></button>
                        <button aria-label="Section view"><svg><use href="#i-section"/></svg></button>
                        <button aria-label="View orientation"><svg><use href="#i-orient"/></svg></button><button class="drop" aria-label="More"></button>
                        <button aria-label="Display style"><svg><use href="#i-display"/></svg></button><button class="drop" aria-label="More"></button>
                        <button aria-label="Hide/show"><svg><use href="#i-eye"/></svg></button><button class="drop" aria-label="More"></button>
                        <button class="faded" aria-label="Edit appearance"><svg><use href="#i-appear"/></svg></button>
                        <button aria-label="Apply scene"><svg><use href="#i-scene"/></svg></button><button class="drop" aria-label="More"></button>
                        <button aria-label="View settings"><svg><use href="#i-monitor"/></svg></button><button class="drop" aria-label="More"></button>
                    </div>
                    <div class="doc-buttons">
                        <button aria-label="Previous document"><svg><use href="#i-prevdoc"/></svg></button>
                        <button aria-label="Next document"><svg><use href="#i-nextdoc"/></svg></button>
                        <button aria-label="Minimize document"><svg><use href="#i-min"/></svg></button>
                        <button aria-label="Restore document"><svg><use href="#i-restore"/></svg></button>
                        <button aria-label="Close document"><svg><use href="#i-close"/></svg></button>
                    </div>
                    <div class="confirm">
                        <button aria-label="Exit sketch"><svg width="46" height="38" viewBox="0 0 46 38"><path d="M22 3H3v16q0 8 8 8h12" fill="none" stroke="#9dbccf" stroke-width="2"/><path d="M23 27l11-9v5q8 0 9-6 2 12-9 12v6z" fill="#a5c3d4" stroke="#7fa8bf"/></svg></button>
                        <button class="cancel" aria-label="Cancel sketch"><svg width="26" height="26" viewBox="0 0 26 26"><path d="M5 2l8 7 8-7 4 4-8 7 8 7-4 4-8-7-8 7-4-4 8-7-8-7z" fill="#cb9093" stroke="#c48186"/></svg></button>
                    </div>
                    <div class="taskpane">
                        <button class="active" aria-label="Resources"><svg><use href="#i-home"/></svg></button>
                        <button aria-label="Design library"><svg><use href="#i-library"/></svg></button>
                        <button aria-label="File explorer"><svg><use href="#i-explorer"/></svg></button>
                        <button aria-label="View palette"><svg><use href="#i-palette"/></svg></button>
                        <button aria-label="Appearances"><svg><use href="#i-ball"/></svg></button>
                        <button aria-label="Custom properties"><svg><use href="#i-list"/></svg></button>
                        <button aria-label="Forum"><svg><use href="#i-forum"/></svg></button>
                    </div>
                </section>
            </div>

            <div class="doc-tabs">
                <div class="tab-nav">
                    <button aria-label="First tab"><svg viewBox="0 0 14 14"><path d="M3 3v8M10 3L5 7l5 4z"/></svg></button>
                    <button aria-label="Previous tab"><svg viewBox="0 0 14 14"><path d="M9 3L4 7l5 4z"/></svg></button>
                    <button aria-label="Next tab"><svg viewBox="0 0 14 14"><path d="M5 3l5 4-5 4z"/></svg></button>
                    <button aria-label="Last tab"><svg viewBox="0 0 14 14"><path d="M11 3v8M4 3l5 4-5 4z"/></svg></button>
                </div>
                <button class="tab active">Model</button>
                <button class="tab">Motion Study 1</button>
            </div>
        </div>

        <div class="toolbar sketching">
            <div class="grip"></div>
            <div class="tool picked"><button aria-label="Sketch"><svg><use href="#i-sketch"/></svg></button><button class="drop" aria-label="More"></button></div>
            <div class="tool"><button aria-label="Smart dimension"><svg><use href="#i-smart"/></svg></button><button class="drop" aria-label="More"></button></div>
            <hr>
            <div class="tool"><button aria-label="Line"><svg><use href="#i-line"/></svg></button><button class="drop" aria-label="More"></button></div>
            <div class="tool"><button aria-label="Rectangle"><svg><use href="#i-rect"/></svg></button><button class="drop" aria-label="More"></button></div>
            <div class="tool"><button aria-label="Slot"><svg><use href="#i-slot"/></svg></button><button class="drop" aria-label="More"></button></div>
            <div class="tool"><button aria-label="Circle"><svg><use href="#i-circle"/></svg></button><button class="drop" aria-label="More"></button></div>
            <div class="tool"><button aria-label="Arc"><svg><use href="#i-arc"/></svg></button><button class="drop" aria-label="More"></button></div>
            <div class="tool"><button aria-label="Spline"><svg><use href="#i-spline"/></svg></button><button class="drop" aria-label="More"></button></div>
            <div class="tool"><button aria-label="Ellipse"><svg><use href="#i-ellipse"/></svg></button><button class="drop" aria-label="More"></button></div>
            <div class="tool"><button aria-label="Sketch fillet"><svg><use href="#i-skfillet"/></svg></button><button class="drop" aria-label="More"></button></div>
            <div class="tool"><button aria-label="Polygon"><svg><use href="#i-polygon"/></svg></button></div>
            <div class="tool"><button aria-label="Point"><svg><use href="#i-point"/></svg></button></div>
            <div class="tool off"><button aria-label="Plane"><svg><use href="#i-skplane"/></svg></button></div>
            <div class="tool"><button aria-label="Text"><svg><use href="#i-text"/></svg></button></div>
            <hr>
            <div class="tool"><button aria-label="Trim"><svg><use href="#i-trim"/></svg></button><button class="drop" aria-label="More"></button></div>
            <div class="tool"><button aria-label="Convert entities"><svg><use href="#i-convent"/></svg></button><button class="drop" aria-label="More"></button></div>
            <div class="tool"><button aria-label="Offset"><svg><use href="#i-offset"/></svg></button></div>
            <div class="tool"><button aria-label="Mirror"><svg><use href="#i-mirror"/></svg></button></div>
            <div class="tool"><button aria-label="Sketch pattern"><svg><use href="#i-skpattern"/></svg></button><button class="drop" aria-label="More"></button></div>
            <div class="tool"><button aria-label="Move"><svg><use href="#i-move"/></svg></button><button class="drop" aria-label="More"></button></div>
            <hr>
            <div class="tool"><button aria-label="Relations"><svg><use href="#i-relations"/></svg></button><button class="drop" aria-label="More"></button></div>
            <div class="tool"><button aria-label="Repair"><svg><use href="#i-repair"/></svg></button></div>
            <div class="tool off"><button aria-label="Quick snaps"><svg><use href="#i-snap"/></svg></button><button class="drop" aria-label="More"></button></div>
            <button class="overflow" aria-label="More tools"><svg width="10" height="10"><path d="M1 1l4 3 4-3M1 5l4 3 4-3" fill="none" stroke="#445" stroke-width="1.5"/></svg></button>
        </div>
    </main>

    <footer class="statusbar">
        <span class="edition">SOLIDWORKS Student Edition - Academic Use Only</span>
        <span class="cell x">-18158.03mm</span>
        <span class="cell y">3057.6mm</span>
        <span class="cell z">0mm</span>
        <span class="cell state">Under Defined</span>
        <span class="cell editing">Editing Sketch1</span>
        <span class="cell light"><svg width="8" height="14"><use href="#i-lights"/></svg></span>
        <button class="units">MMGS <i></i></button>
        <button class="tag" aria-label="Tags"><svg width="18" height="18"><use href="#i-tag"/></svg></button>
    </footer>
</body>
</html>
```
FILE: styles.css
```css
* {
    box-sizing: border-box;
}
body {
    margin: 0;
    height: 100vh;
    display: flex;
    flex-direction: column;
    overflow: hidden;
    background: #f7f7f7;
    color: #000;
    font: 12px/16px "Open Sans", "Noto Sans", sans-serif;
}
button {
    padding: 0;
    border: 0;
    background: none;
    color: inherit;
    font: inherit;
    display: flex;
    align-items: center;
    justify-content: center;
    flex: none;
}
svg {
    display: block;
    flex: none;
}
.sprite {
    position: absolute;
    width: 0;
    height: 0;
}
/* small triangle used by every drop-down arrow */
.drop {
    width: 14px;
    height: 22px;
}
.drop::after {
    content: "";
    border: 3px solid transparent;
    border-top-color: #444;
    border-bottom: 0;
}

/* title bar */
.titlebar {
    display: flex;
    align-items: center;
    height: 37px;
    flex: none;
    border-bottom: 1px solid #888;
}
.logo {
    width: 144px;
    height: 36px;
    margin-left: 13px;
    padding: 0 0 2px 4px;
    display: flex;
    align-items: flex-end;
    border: 1px solid #aaa;
    border-width: 0 2px 1px 1px;
    background: linear-gradient(160deg, #fff 40%, #dcdcdc);
}
.logo-text {
    margin: 0 0 0 2px;
    color: #d8352a;
    font: italic 300 17px/18px "Open Sans", sans-serif;
}
.logo-text b {
    font-weight: 800;
}
.menu {
    display: flex;
    align-items: center;
    width: 361px;
    height: 37px;
    padding: 4px 9px 0 28px;
    justify-content: space-between;
    border-right: 1px solid #999;
    border-bottom: 1px solid #000;
}
.menu a {
    color: #000;
    text-decoration: none;
}
.pin {
    margin-left: 9px;
}
.quick {
    display: flex;
    align-items: center;
    width: 348px;
    padding: 4px 0 0 12px;
}
.quick button {
    width: 26px;
    height: 26px;
}
.quick .drop {
    width: 13px;
}
.quick svg {
    width: 20px;
    height: 20px;
}
.quick .picked {
    background: #d0d0d0;
    border: 1px solid #5a9cc0;
}
.quick .boxed {
    border: 1px solid #999;
    border-left: 0;
}
.doc-title {
    flex: 1;
    padding: 4px 0 0 18px;
    font-size: 11px;
    white-space: nowrap;
}
.search {
    display: flex;
    align-items: center;
    width: 202px;
    height: 23px;
    margin: 4px 12px 0 0;
    border: 1px solid #bbb;
}
.help-badge {
    width: 16px;
    height: 16px;
    margin: 0 4px 0 5px;
    border: 1px solid #333;
    border-radius: 50%;
    color: #1f6f96;
    font-weight: bold;
    line-height: 14px;
    text-align: center;
}
.search input {
    flex: 1;
    min-width: 0;
    height: 18px;
    padding: 0 1px;
    border: 0;
    background: #ececf0;
    font: inherit;
    font-size: 11px;
}
.search input::placeholder {
    color: #555;
}
.search button {
    margin-left: 3px;
}
.search .drop {
    width: 8px;
    margin: 0 2px;
}
.window-buttons {
    display: flex;
    align-items: center;
    padding-top: 4px;
}
.window-buttons button {
    width: 26px;
    height: 22px;
}
.window-buttons .drop {
    width: 16px;
}
.window-buttons .help {
    width: 14px;
    color: #555;
    font-size: 18px;
    font-weight: bold;
}
.window-buttons svg {
    width: 14px;
    height: 14px;
}

/* tool columns */
.main {
    flex: 1;
    display: flex;
    min-height: 0;
}
.toolbar {
    flex: none;
    align-self: flex-start;
}
.grip {
    height: 14px;
    padding-top: 4px;
    background: radial-gradient(circle at 2px 2px, #999 1px, transparent 2px) 0 0 / 4px 4px repeat-x content-box;
}
.tool {
    display: flex;
    align-items: center;
    height: 26px;
}
.tool button {
    width: 26px;
    height: 26px;
}
.tool .drop {
    width: 14px;
}
.tool.off {
    opacity: .4;
}
.toolbar hr {
    height: 1px;
    margin: 2px 0 5px;
    border: 0;
    background: #888;
}
.features {
    width: 50px;
    padding: 0 3px 6px 5px;
    border-bottom: 1px solid #888;
}
.features hr,
.views hr {
    margin-left: 2px;
}
.features svg,
.views svg {
    width: 18px;
    height: 18px;
}
.features .drop {
    margin-left: 1px;
}
.views {
    width: 31px;
    padding: 0 0 7px 3px;
    border-left: 1px solid #777;
    border-bottom: 1px solid #888;
}
.sketching {
    align-self: stretch;
    width: 47px;
    padding: 0 0 0 6px;
    border-left: 1px solid #e8e8ee;
    display: flex;
    flex-direction: column;
}
.sketching hr {
    width: 39px;
    margin-left: 1px;
    flex: none;
}
.sketching svg {
    width: 20px;
    height: 20px;
}
.sketching .picked button:first-child {
    background: #d4d4d4;
    border: 1px solid #5a9cc0;
}
.sketching .picked .drop {
    height: 26px;
    border: 1px solid #999;
}
.sketching .overflow {
    flex: 1;
    align-self: center;
    padding-top: 6px;
}
.sketching .overflow svg {
    width: 10px;
    height: 10px;
}

/* feature tree */
.center {
    flex: 1;
    min-width: 0;
    display: flex;
    flex-direction: column;
}
.workspace {
    flex: 1;
    min-height: 0;
    display: flex;
}
.panel {
    position: relative;
    width: 272px;
    flex: none;
    display: flex;
    flex-direction: column;
    padding: 3px 2px 0;
    border-right: 1px solid #999;
}
.panel-grip {
    height: 16px;
    border: 1px solid #ccc;
    border-width: 1px 0;
    margin-bottom: 4px;
    display: flex;
    align-items: center;
    justify-content: center;
}
.panel-grip::after,
.splitter::after {
    content: "";
    width: 6px;
    height: 6px;
    border: 1px solid #999;
    border-radius: 50%;
    background: #ccc;
}
.panel-tabs {
    display: flex;
    height: 26px;
    border-top: 1px solid #aaa;
    border-bottom: 1px solid #999;
}
.panel-tabs button {
    width: 40px;
    background: #d4d4d4;
    border-right: 1px solid #888;
}
.panel-tabs .active {
    background: none;
    height: 26px;
}
.panel-tabs .more {
    width: 20px;
    margin-left: auto;
    border: 0;
    background: none;
}
.panel svg {
    width: 20px;
    height: 20px;
}
.filter {
    display: flex;
    align-items: center;
    height: 26px;
    margin: 0 0 0 3px;
    border: 1px solid #ccc;
}
.filter input {
    flex: 1;
    min-width: 0;
    border: 0;
    background: none;
    font: inherit;
}
.tree {
    list-style: none;
    margin: 0;
    padding: 1px 0 0;
    border-bottom: 2px solid #b4b4d4;
}
.tree li {
    display: flex;
    align-items: center;
    height: 22px;
    padding-left: 24px;
    white-space: nowrap;
    overflow: hidden;
}
.tree .root {
    padding-left: 1px;
    font-size: 11px;
}
.tree li svg {
    margin-right: 4px;
}
.tree .has-kids {
    padding-left: 8px;
}
.tree .has-kids::before {
    content: "";
    margin-right: 11px;
    border: 4px solid transparent;
    border-left: 5px solid #555;
    border-right: 0;
}
.scrollbar {
    display: flex;
    align-items: center;
    height: 16px;
    margin-top: auto;
    margin-bottom: 2px;
    background: #ececec;
}
.scrollbar button {
    width: 17px;
    height: 15px;
}
.scrollbar .left::after,
.scrollbar .right::after {
    content: "";
    border: 4px solid transparent;
}
.scrollbar .left::after {
    border-left: 0;
    border-right: 4px solid #222;
}
.scrollbar .right::after {
    border-right: 0;
    border-left: 4px solid #222;
}
.scrollbar .right {
    width: 12px;
}
.track {
    flex: 1;
}
.thumb {
    width: 88%;
    height: 14px;
    border: 1px solid #999;
    border-radius: 2px;
    background: linear-gradient(#f4f4f4 50%, #d4d4d4 50%);
    display: flex;
    align-items: center;
    justify-content: center;
}
.thumb::after {
    content: "";
    width: 8px;
    height: 6px;
    background: repeating-linear-gradient(90deg, #555 0 1px, transparent 1px 3px);
}
/* handle hangs over the graphics area */
.splitter {
    position: absolute;
    left: 100%;
    top: 312px;
    width: 9px;
    height: 38px;
    z-index: 1;
    background: #f7f7f7;
    border: 1px solid #aaa;
    border-left: 0;
}

/* graphics area */
.viewport {
    position: relative;
    flex: 1;
    min-width: 0;
    background: #c5c8d2;
}
.drawing {
    width: 100%;
    height: 100%;
}
.edge {
    fill: none;
    stroke: #00f;
    stroke-width: 2;
}
.edge .thin {
    stroke-width: 1;
}
.points {
    fill: #00f;
    stroke: #00f;
    stroke-width: 1;
}
.ext,
.dim,
.dim-in {
    fill: none;
    stroke: #111;
    stroke-width: 1;
}
.dim path {
    marker-start: url(#arrow);
    marker-end: url(#arrow);
}
.dim-in path {
    marker-end: url(#arrow);
}
.labels {
    font: bold 17px/20px Lato, sans-serif;
    text-anchor: middle;
}
.heads-up {
    position: absolute;
    left: 315px;
    top: 5px;
    display: flex;
}
.heads-up button {
    width: 26px;
    height: 22px;
    opacity: .8;
}
.heads-up .drop {
    width: 14px;
    opacity: .5;
}
.heads-up .faded {
    opacity: .5;
}
.heads-up svg {
    width: 20px;
    height: 20px;
}
.doc-buttons {
    position: absolute;
    right: 6px;
    top: 5px;
    display: flex;
    opacity: .7;
}
.doc-buttons button {
    width: 26px;
    height: 22px;
}
.doc-buttons svg {
    width: 14px;
    height: 14px;
}
.confirm {
    position: absolute;
    right: 41px;
    top: 33px;
    display: flex;
}
.confirm .cancel {
    margin-top: 32px;
}
.taskpane {
    position: absolute;
    right: 0;
    top: 60px;
    border: 1px solid #888;
    border-right: 0;
}
.taskpane button {
    width: 24px;
    height: 24px;
    background: #d4d4d4;
    border-bottom: 1px solid #888;
}
.taskpane button:last-child {
    border-bottom: 0;
}
.taskpane .active {
    background: #f7f7f7;
}
.taskpane svg {
    width: 19px;
    height: 19px;
}

/* document tabs */
.doc-tabs {
    display: flex;
    height: 16px;
    margin-left: 2px;
    flex: none;
    border-top: 1px solid #888;
    border-bottom: 1px solid #888;
}
.tab-nav {
    display: flex;
    width: 67px;
    padding-left: 2px;
    background: #aaa;
    border-top: 1px solid #222;
}
.tab-nav button {
    width: 16px;
    height: 13px;
    border-right: 1px solid #888;
}
.tab-nav svg {
    width: 14px;
    height: 14px;
    fill: #808080;
    stroke: #808080;
}
.tab {
    width: 108px;
    padding-right: 8px;
    background: #d2d2d2;
    border: 1px solid #888;
    border-width: 0 1px;
}
.tab.active {
    width: 57px;
    padding: 0 0 0 3px;
    background: none;
    border: 0;
    font-weight: bold;
}

/* status bar */
.statusbar {
    display: flex;
    align-items: center;
    height: 20px;
    flex: none;
    padding: 0 0 0 3px;
    border-bottom: 1px solid #46637c;
    white-space: nowrap;
}
.edition {
    flex: 1;
}
.cell.x {
    width: 93px;
}
.cell.y {
    width: 69px;
}
.cell.z {
    width: 49px;
}
.cell.state {
    width: 84px;
    border-right: 1px solid #aaa;
}
.cell.editing {
    width: 100px;
    padding-left: 10px;
    border-right: 1px solid #aaa;
}
.cell.light {
    width: 39px;
    display: flex;
    justify-content: center;
    border-right: 1px solid #aaa;
}
.units {
    width: 104px;
    gap: 16px;
}
.units i {
    border: 3px solid transparent;
    border-bottom-color: #333;
    border-top: 0;
}
.tag {
    width: 62px;
    padding-left: 44px;
}
```
